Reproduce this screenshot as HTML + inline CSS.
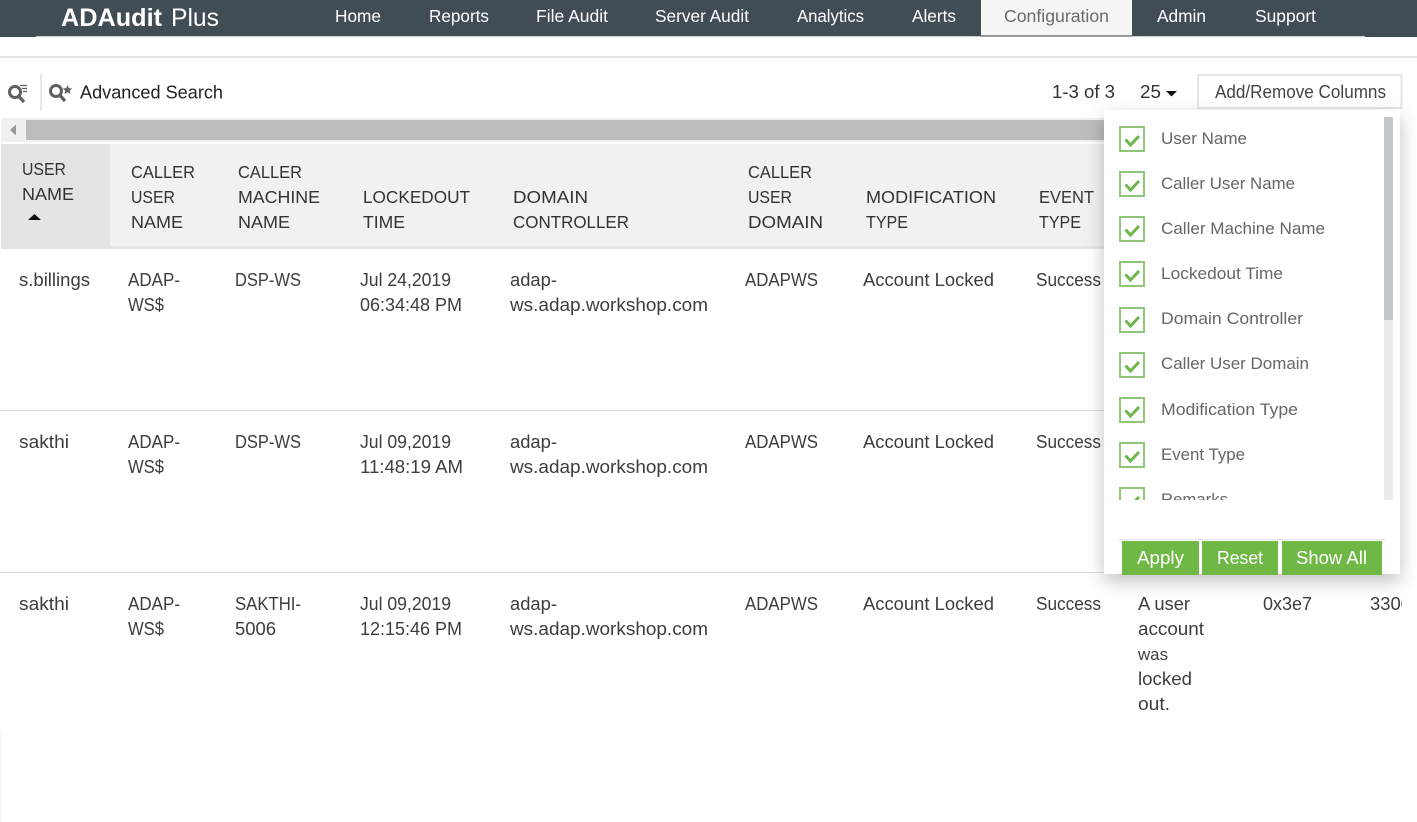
<!DOCTYPE html>
<html><head><meta charset="utf-8"><title>ADAudit Plus</title>
<style>
html,body{margin:0;padding:0;background:#fff;width:1417px;height:822px;overflow:hidden}
svg{display:block}
text{font-family:"Liberation Sans",sans-serif;font-size:18px;fill:#3d3d3d}
.n{fill:#fff;font-size:17.5px}
.h{fill:#333;font-size:17.5px}
.l{fill:#666;font-size:17px}
.b{fill:#fff;font-size:18.5px}
</style></head><body>
<svg width="1417" height="822" viewBox="0 0 1417 822" xmlns="http://www.w3.org/2000/svg">
<defs>
<filter id="s" x="-15%" y="-10%" width="130%" height="125%"><feDropShadow dx="0" dy="7" stdDeviation="9" flood-color="#000" flood-opacity=".24"/></filter>
<clipPath id="c"><rect x="1104" y="110" width="280" height="390"/></clipPath>
<clipPath id="t"><rect x="0" y="0" width="1402" height="822"/></clipPath>
<g id="k"><rect x="1" y="1" width="24" height="24" fill="#fff" stroke="#8fc677" stroke-width="2"/><path d="M6.500 13.500l5 5.500L20 10" fill="none" stroke="#6fb64f" stroke-width="3"/></g>
</defs>
<!-- header -->
<rect width="1417" height="37" fill="#414d55"/>
<rect x="36" y="36" width="1329" height="1" fill="#c9cdd0"/>
<rect x="981" y="0" width="151" height="36" fill="#f5f5f5"/>
<rect x="981" y="35" width="151" height="2" fill="#999"/>
<text x="61" y="26" style="font-size:25px;fill:#fff;font-weight:bold" textLength="101" lengthAdjust="spacingAndGlyphs">ADAudit</text>
<text x="171" y="26" style="font-size:25px;fill:#fff" textLength="48" lengthAdjust="spacingAndGlyphs">Plus</text>
<g>
<text class="n" x="335" y="22" textLength="46" lengthAdjust="spacingAndGlyphs">Home</text>
<text class="n" x="429" y="22" textLength="60" lengthAdjust="spacingAndGlyphs">Reports</text>
<text class="n" x="536" y="22" textLength="72" lengthAdjust="spacingAndGlyphs">File Audit</text>
<text class="n" x="655" y="22" textLength="94" lengthAdjust="spacingAndGlyphs">Server Audit</text>
<text class="n" x="797" y="22" textLength="67" lengthAdjust="spacingAndGlyphs">Analytics</text>
<text class="n" x="912" y="22" textLength="44" lengthAdjust="spacingAndGlyphs">Alerts</text>
<text class="n" x="1004" y="22" textLength="105" lengthAdjust="spacingAndGlyphs" style="fill:#6b6b6b">Configuration</text>
<text class="n" x="1157" y="22" textLength="49" lengthAdjust="spacingAndGlyphs">Admin</text>
<text class="n" x="1255" y="22" textLength="61" lengthAdjust="spacingAndGlyphs">Support</text>
</g>
<rect x="0" y="56" width="1417" height="2" fill="#e6e6e6"/>
<!-- toolbar icons -->
<g fill="none" stroke="#5f5f5f">
<circle cx="15" cy="92" r="5.500" stroke-width="3"/><path d="M19 96.500l5 5.500" stroke-width="3.200"/>
<path d="M20 85.500h7M22 88.500h5M23 91.500h4" stroke-width="1.200"/>
<circle cx="56" cy="91" r="5.500" stroke-width="3"/><path d="M60 95.500l5 5.500" stroke-width="3.200"/>
</g>
<path d="M67.500 85l1.400 3.200 3.300.3-2.500 2.200.8 3.300-3-1.800-3 1.800.8-3.300-2.500-2.200 3.300-.3z" fill="#5f5f5f"/>
<rect x="40" y="74" width="2" height="37" fill="#e8e8e8"/>
<text x="80" y="98.500" style="fill:#222" textLength="143" lengthAdjust="spacingAndGlyphs">Advanced Search</text>
<text x="1052" y="98" textLength="63" lengthAdjust="spacingAndGlyphs" style="fill:#333">1-3 of 3</text>
<text x="1140" y="98" textLength="21" lengthAdjust="spacingAndGlyphs" style="fill:#333">25</text>
<path d="M1166 91h11l-5.500 5.500z" fill="#111"/>
<rect x="1198" y="75" width="203.500" height="33" fill="#fff" stroke="#e6e6e6" stroke-width="2"/>
<text x="1215" y="98" textLength="171" lengthAdjust="spacingAndGlyphs" style="fill:#444">Add/Remove Columns</text>
<!-- h scrollbar -->
<rect x="1" y="118" width="1399" height="24" fill="#f0f0f0"/>
<rect x="26" y="120" width="1374" height="20" fill="#bcbcbc"/>
<path d="M16 124.500v11l-6-5.500z" fill="#9a9a9a"/>
<!-- table head -->
<rect x="1" y="144" width="1399" height="102" fill="#f1f1f1"/>
<rect x="1" y="246" width="1399" height="3" fill="#e4e4e4"/>
<rect x="1" y="144" width="109" height="102" fill="#e2e4e6"/>
<text class="h" x="22" y="175" textLength="44" lengthAdjust="spacingAndGlyphs">USER</text>
<text class="h" x="22" y="200" textLength="52" lengthAdjust="spacingAndGlyphs">NAME</text>
<path d="M28 220l6.500-6 6.500 6z" fill="#111"/>
<text class="h" x="131" y="178" textLength="64" lengthAdjust="spacingAndGlyphs">CALLER</text>
<text class="h" x="131" y="203" textLength="44" lengthAdjust="spacingAndGlyphs">USER</text>
<text class="h" x="131" y="228" textLength="52" lengthAdjust="spacingAndGlyphs">NAME</text>
<text class="h" x="238" y="178" textLength="64" lengthAdjust="spacingAndGlyphs">CALLER</text>
<text class="h" x="238" y="203" textLength="82" lengthAdjust="spacingAndGlyphs">MACHINE</text>
<text class="h" x="238" y="228" textLength="52" lengthAdjust="spacingAndGlyphs">NAME</text>
<text class="h" x="363" y="203" textLength="107" lengthAdjust="spacingAndGlyphs">LOCKEDOUT</text>
<text class="h" x="363" y="228" textLength="42" lengthAdjust="spacingAndGlyphs">TIME</text>
<text class="h" x="513" y="203" textLength="75" lengthAdjust="spacingAndGlyphs">DOMAIN</text>
<text class="h" x="513" y="228" textLength="116" lengthAdjust="spacingAndGlyphs">CONTROLLER</text>
<text class="h" x="748" y="178" textLength="64" lengthAdjust="spacingAndGlyphs">CALLER</text>
<text class="h" x="748" y="203" textLength="44" lengthAdjust="spacingAndGlyphs">USER</text>
<text class="h" x="748" y="228" textLength="75" lengthAdjust="spacingAndGlyphs">DOMAIN</text>
<text class="h" x="866" y="203" textLength="130" lengthAdjust="spacingAndGlyphs">MODIFICATION</text>
<text class="h" x="866" y="228" textLength="42" lengthAdjust="spacingAndGlyphs">TYPE</text>
<text class="h" x="1039" y="203" textLength="55" lengthAdjust="spacingAndGlyphs">EVENT</text>
<text class="h" x="1039" y="228" textLength="42" lengthAdjust="spacingAndGlyphs">TYPE</text>
<!-- row lines -->
<rect x="0" y="410" width="1400" height="1" fill="#dcdcdc"/>
<rect x="0" y="572" width="1400" height="1" fill="#dcdcdc"/>
<!-- row 1 -->
<text x="19" y="286" textLength="71" lengthAdjust="spacingAndGlyphs">s.billings</text>
<text x="128" y="286" textLength="52" lengthAdjust="spacingAndGlyphs">ADAP-</text>
<text x="128" y="311" textLength="36" lengthAdjust="spacingAndGlyphs">WS$</text>
<text x="235" y="286" textLength="66" lengthAdjust="spacingAndGlyphs">DSP-WS</text>
<text x="360" y="286" textLength="91" lengthAdjust="spacingAndGlyphs">Jul 24,2019</text>
<text x="360" y="311" textLength="102" lengthAdjust="spacingAndGlyphs">06:34:48 PM</text>
<text x="510" y="286" textLength="47" lengthAdjust="spacingAndGlyphs">adap-</text>
<text x="510" y="311" textLength="198" lengthAdjust="spacingAndGlyphs">ws.adap.workshop.com</text>
<text x="745" y="286" textLength="73" lengthAdjust="spacingAndGlyphs">ADAPWS</text>
<text x="863" y="286" textLength="131" lengthAdjust="spacingAndGlyphs">Account Locked</text>
<text x="1036" y="286" textLength="65" lengthAdjust="spacingAndGlyphs">Success</text>
<!-- row 2 -->
<text x="19" y="448" textLength="50" lengthAdjust="spacingAndGlyphs">sakthi</text>
<text x="128" y="448" textLength="52" lengthAdjust="spacingAndGlyphs">ADAP-</text>
<text x="128" y="473" textLength="36" lengthAdjust="spacingAndGlyphs">WS$</text>
<text x="235" y="448" textLength="66" lengthAdjust="spacingAndGlyphs">DSP-WS</text>
<text x="360" y="448" textLength="91" lengthAdjust="spacingAndGlyphs">Jul 09,2019</text>
<text x="360" y="473" textLength="103" lengthAdjust="spacingAndGlyphs">11:48:19 AM</text>
<text x="510" y="448" textLength="47" lengthAdjust="spacingAndGlyphs">adap-</text>
<text x="510" y="473" textLength="198" lengthAdjust="spacingAndGlyphs">ws.adap.workshop.com</text>
<text x="745" y="448" textLength="73" lengthAdjust="spacingAndGlyphs">ADAPWS</text>
<text x="863" y="448" textLength="131" lengthAdjust="spacingAndGlyphs">Account Locked</text>
<text x="1036" y="448" textLength="65" lengthAdjust="spacingAndGlyphs">Success</text>
<!-- row 3 -->
<text x="19" y="610" textLength="50" lengthAdjust="spacingAndGlyphs">sakthi</text>
<text x="128" y="610" textLength="52" lengthAdjust="spacingAndGlyphs">ADAP-</text>
<text x="128" y="635" textLength="36" lengthAdjust="spacingAndGlyphs">WS$</text>
<text x="235" y="610" textLength="66" lengthAdjust="spacingAndGlyphs">SAKTHI-</text>
<text x="235" y="635" textLength="41" lengthAdjust="spacingAndGlyphs">5006</text>
<text x="360" y="610" textLength="91" lengthAdjust="spacingAndGlyphs">Jul 09,2019</text>
<text x="360" y="635" textLength="102" lengthAdjust="spacingAndGlyphs">12:15:46 PM</text>
<text x="510" y="610" textLength="47" lengthAdjust="spacingAndGlyphs">adap-</text>
<text x="510" y="635" textLength="198" lengthAdjust="spacingAndGlyphs">ws.adap.workshop.com</text>
<text x="745" y="610" textLength="73" lengthAdjust="spacingAndGlyphs">ADAPWS</text>
<text x="863" y="610" textLength="131" lengthAdjust="spacingAndGlyphs">Account Locked</text>
<text x="1036" y="610" textLength="65" lengthAdjust="spacingAndGlyphs">Success</text>
<text x="1138" y="610" textLength="52" lengthAdjust="spacingAndGlyphs">A user</text>
<text x="1138" y="635" textLength="66" lengthAdjust="spacingAndGlyphs">account</text>
<text x="1138" y="660" textLength="30" lengthAdjust="spacingAndGlyphs" style="font-size:17px">was</text>
<text x="1138" y="685" textLength="54" lengthAdjust="spacingAndGlyphs">locked</text>
<text x="1138" y="710" textLength="32" lengthAdjust="spacingAndGlyphs">out.</text>
<text x="1263" y="610" textLength="49" lengthAdjust="spacingAndGlyphs">0x3e7</text>
<g clip-path="url(#t)"><text x="1370" y="610" textLength="41" lengthAdjust="spacingAndGlyphs">3300</text></g>
<rect x="0" y="733" width="2" height="89" fill="#f6f6f6"/>
<!-- popup -->
<rect x="1104" y="110" width="296" height="464" fill="#fff" filter="url(#s)"/>
<rect x="1384" y="117" width="9" height="383" fill="#ececec"/>
<rect x="1384" y="117" width="9" height="203" fill="#c3c7ca"/>
<g clip-path="url(#c)">
<use href="#k" x="1119" y="126"/>
<use href="#k" x="1119" y="171"/>
<use href="#k" x="1119" y="216"/>
<use href="#k" x="1119" y="261"/>
<use href="#k" x="1119" y="307"/>
<use href="#k" x="1119" y="352"/>
<use href="#k" x="1119" y="397"/>
<use href="#k" x="1119" y="442"/>
<use href="#k" x="1119" y="487"/>
<text class="l" x="1161" y="144" textLength="86" lengthAdjust="spacingAndGlyphs">User Name</text>
<text class="l" x="1161" y="189" textLength="134" lengthAdjust="spacingAndGlyphs">Caller User Name</text>
<text class="l" x="1161" y="234" textLength="164" lengthAdjust="spacingAndGlyphs">Caller Machine Name</text>
<text class="l" x="1161" y="279" textLength="122" lengthAdjust="spacingAndGlyphs">Lockedout Time</text>
<text class="l" x="1161" y="324" textLength="142" lengthAdjust="spacingAndGlyphs">Domain Controller</text>
<text class="l" x="1161" y="369" textLength="148" lengthAdjust="spacingAndGlyphs">Caller User Domain</text>
<text class="l" x="1161" y="415" textLength="137" lengthAdjust="spacingAndGlyphs">Modification Type</text>
<text class="l" x="1161" y="460" textLength="84" lengthAdjust="spacingAndGlyphs">Event Type</text>
<text class="l" x="1161" y="505" textLength="67" lengthAdjust="spacingAndGlyphs">Remarks</text>
</g>
<rect x="1119" y="539" width="267" height="1" fill="#e2e2e2"/>
<rect x="1122" y="541" width="77" height="34" fill="#6fb846"/>
<rect x="1202" y="541" width="76" height="34" fill="#6fb846"/>
<rect x="1282" y="541" width="100" height="34" fill="#6fb846"/>
<text class="b" x="1137" y="564" textLength="47" lengthAdjust="spacingAndGlyphs">Apply</text>
<text class="b" x="1217" y="564" textLength="46" lengthAdjust="spacingAndGlyphs">Reset</text>
<text class="b" x="1296" y="564" textLength="71" lengthAdjust="spacingAndGlyphs">Show All</text>
</svg>
</body></html>
